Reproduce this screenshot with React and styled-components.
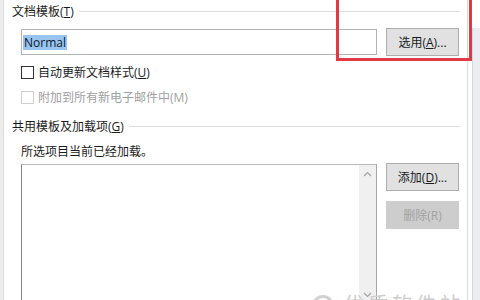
import styled, { createGlobalStyle } from "styled-components";

const GlobalStyle = createGlobalStyle`
  html, body {
    margin: 0;
    padding: 0;
    background: #ffffff;
    overflow: hidden;
  }
  body {
    font-family: "Open Sans", "Noto Sans CJK SC", sans-serif;
    font-size: 12px;
    color: #1b1b1b;
  }
`;

const Page = styled.div`
  position: relative;
  width: 480px;
  height: 300px;
  display: flex;
  overflow: hidden;
  background: #fff;
`;

const LeftEdge = styled.div`
  width: 3px;
  background: #ececec;
  border-right: 1px solid #dedede;
`;

const Dialog = styled.div`
  flex: 1;
  padding: 2px 7px 0 8px;
  border-right: 1px solid #dadada;
  display: flex;
  flex-direction: column;
`;

const RightEdge = styled.div`
  width: 12px;
  display: flex;
  justify-content: flex-end;
  padding-top: 28px;
`;

const EdgePanel = styled.div`
  width: 7px;
  background: #eaecef;
  border-left: 1px solid #d3d9e0;
`;

const GroupHeader = styled.div`
  display: flex;
  align-items: center;
  gap: 5px;
  height: 18px;
  margin-top: ${(p) => p.$top || 0}px;
  white-space: nowrap;

  &::after {
    content: "";
    flex: 1;
    border-top: 1px solid #dcdcdc;
  }
`;

const Row = styled.div`
  display: flex;
  align-items: ${(p) => p.$align || "center"};
  gap: 9px;
  margin-top: ${(p) => p.$top || 0}px;
  padding-left: 9px;
  padding-right: 1px;
`;

const TextBox = styled.div`
  flex: 1;
  height: 24px;
  border: 1px solid #b4b4b4;
  background: #fff;
  display: flex;
  align-items: center;
  padding-left: 1px;
`;

const Selected = styled.span`
  font-size: 12px;
  line-height: 15px;
  padding: 0 1px;
  background: #99c4f0;
  color: #0a1a33;
`;

const Button = styled.div`
  width: 71px;
  height: 26px;
  flex: none;
  display: flex;
  align-items: center;
  justify-content: center;
  background: ${(p) => (p.$disabled ? "#cdcdcd" : "#e1e1e1")};
  border: 1px solid ${(p) => (p.$disabled ? "#cdcdcd" : "#adadad")};
  color: ${(p) => (p.$disabled ? "#a2a2a2" : "#1b1b1b")};
  white-space: nowrap;
`;

const CheckRow = styled.label`
  display: flex;
  align-items: center;
  gap: 4px;
  height: 18px;
  margin-top: 7px;
  padding-left: 9px;
  color: ${(p) => (p.$disabled ? "#a0a0a0" : "#1b1b1b")};
  white-space: nowrap;
`;

const Box = styled.span`
  width: 11px;
  height: 11px;
  border: 1px solid ${(p) => (p.$disabled ? "#cfcfcf" : "#333")};
  background: #fff;
`;

const Note = styled.div`
  height: 18px;
  line-height: 18px;
  margin-top: 8px;
  padding-left: 9px;
`;

const ListBox = styled.div`
  flex: 1;
  height: 137px;
  margin-top: 1px;
  display: flex;
  justify-content: flex-end;
  border: 1px solid #a6a6a6;
  border-left-color: #858585;
  border-top-color: #b8b8b8;
  background: #fff;
`;

const ScrollBar = styled.div`
  width: 17px;
  background: #f0f0f0;
  display: flex;
  flex-direction: column;
  justify-content: space-between;
  align-items: center;
  padding: 6px 0 4px;
`;

const ButtonColumn = styled.div`
  display: flex;
  flex-direction: column;
  gap: 10px;
`;

const Highlight = styled.div`
  position: absolute;
  left: 336px;
  top: -3px;
  width: 130px;
  height: 58px;
  border: 3px solid #e23a44;
`;

const Watermark = styled.div`
  position: absolute;
  left: 312px;
  top: 295px;
  display: flex;
  align-items: flex-start;
  gap: 10px;
  color: #cdcdcd;
  font-size: 20px;
  line-height: 20px;
  letter-spacing: 4px;
`;

const Ring = styled.span`
  width: 16px;
  height: 16px;
  border: 3px solid #d2d2d2;
  border-radius: 50%;
`;

const Chevron = ({ up }) => (
  <svg width="9" height="6" viewBox="0 0 9 6">
    <path
      d={up ? "M1 5 L4.5 1.5 L8 5" : "M1 1 L4.5 4.5 L8 1"}
      fill="none"
      stroke="#a3a3a3"
      strokeWidth="1.2"
    />
  </svg>
);

export default function App() {
  return (
    <>
      <GlobalStyle />
      <Page>
        <LeftEdge />
        <Dialog>
          <GroupHeader>
            <span>
              文档模板(<u>T</u>)
            </span>
          </GroupHeader>
          <Row $top={8}>
            <TextBox>
              <Selected>Normal</Selected>
            </TextBox>
            <Button>
              <span>
                选用(<u>A</u>)...
              </span>
            </Button>
          </Row>
          <CheckRow>
            <Box />
            <span>
              自动更新文档样式(<u>U</u>)
            </span>
          </CheckRow>
          <CheckRow $disabled>
            <Box $disabled />
            <span>附加到所有新电子邮件中(M)</span>
          </CheckRow>
          <GroupHeader $top={11}>
            <span>
              共用模板及加载项(<u>G</u>)
            </span>
          </GroupHeader>
          <Note>所选项目当前已经加载。</Note>
          <Row $top={2} $align="flex-start">
            <ListBox>
              <ScrollBar>
                <Chevron up />
                <Chevron />
              </ScrollBar>
            </ListBox>
            <ButtonColumn>
              <Button>
                <span>
                  添加(<u>D</u>)...
                </span>
              </Button>
              <Button $disabled>删除(R)</Button>
            </ButtonColumn>
          </Row>
        </Dialog>
        <RightEdge>
          <EdgePanel />
        </RightEdge>
        <Highlight />
        <Watermark>
          <Ring />
          优质软件站
        </Watermark>
      </Page>
    </>
  );
}
